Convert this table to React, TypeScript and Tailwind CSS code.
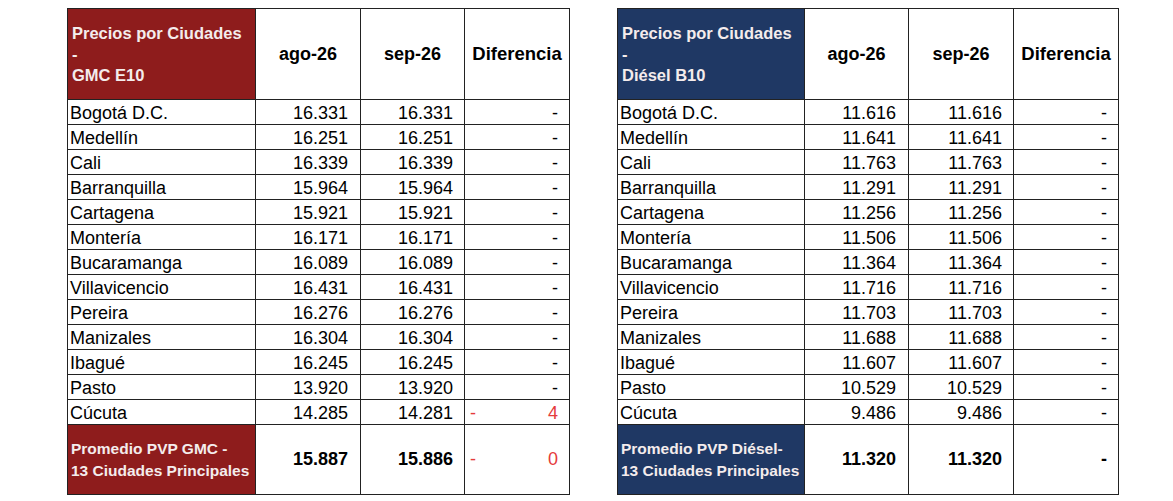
import React from "react";

type Row = { city: string; a: string; b: string; diff?: string };

interface TableProps {
  title: string;
  fuel: string;
  footer: [string, string];
  fill: string;
  rows: Row[];
  avg: [string, string];
  avgDiff?: string;
  widths: [string, string, string, string];
}

const gmc: Row[] = [
  { city: "Bogotá D.C.", a: "16.331", b: "16.331" },
  { city: "Medellín", a: "16.251", b: "16.251" },
  { city: "Cali", a: "16.339", b: "16.339" },
  { city: "Barranquilla", a: "15.964", b: "15.964" },
  { city: "Cartagena", a: "15.921", b: "15.921" },
  { city: "Montería", a: "16.171", b: "16.171" },
  { city: "Bucaramanga", a: "16.089", b: "16.089" },
  { city: "Villavicencio", a: "16.431", b: "16.431" },
  { city: "Pereira", a: "16.276", b: "16.276" },
  { city: "Manizales", a: "16.304", b: "16.304" },
  { city: "Ibagué", a: "16.245", b: "16.245" },
  { city: "Pasto", a: "13.920", b: "13.920" },
  { city: "Cúcuta", a: "14.285", b: "14.281", diff: "4" },
];

const diesel: Row[] = [
  { city: "Bogotá D.C.", a: "11.616", b: "11.616" },
  { city: "Medellín", a: "11.641", b: "11.641" },
  { city: "Cali", a: "11.763", b: "11.763" },
  { city: "Barranquilla", a: "11.291", b: "11.291" },
  { city: "Cartagena", a: "11.256", b: "11.256" },
  { city: "Montería", a: "11.506", b: "11.506" },
  { city: "Bucaramanga", a: "11.364", b: "11.364" },
  { city: "Villavicencio", a: "11.716", b: "11.716" },
  { city: "Pereira", a: "11.703", b: "11.703" },
  { city: "Manizales", a: "11.688", b: "11.688" },
  { city: "Ibagué", a: "11.607", b: "11.607" },
  { city: "Pasto", a: "10.529", b: "10.529" },
  { city: "Cúcuta", a: "9.486", b: "9.486" },
];

const DiffCell = ({ value, bold }: { value?: string; bold?: boolean }) =>
  value ? (
    <div className="flex justify-between pl-[5px] pr-[11px] text-[#e53b3b]">
      <span>-</span>
      <span>{value}</span>
    </div>
  ) : (
    <div className={`text-right pr-[11px] ${bold ? "font-bold" : ""}`}>-</div>
  );

const PriceTable = ({ title, fuel, footer, fill, rows, avg, avgDiff, widths }: TableProps) => {
  return (
    <table className="table-fixed border-collapse border-[1.5px] border-[#222] text-black">
      <colgroup>
        {widths.map((w, i) => (
          <col key={i} className={w} />
        ))}
      </colgroup>
      <thead>
        <tr className="h-[91px]">
          <th className={`${fill} border border-[#222] text-left align-middle px-[4px] text-[16.5px] leading-[21px] font-bold text-[#f4ecec]`}>
            <div>{title}</div>
            <div>-</div>
            <div>{fuel}</div>
          </th>
          <th className="border border-[#222] text-[18px] font-bold text-center">ago-26</th>
          <th className="border border-[#222] text-[18px] font-bold text-center">sep-26</th>
          <th className="border border-[#222] text-[18.5px] font-bold text-center">Diferencia</th>
        </tr>
      </thead>
      <tbody className="text-[18px]">
        {rows.map((r) => (
          <tr key={r.city} className="h-[24.9px] leading-[22px]">
            <td className="border border-[#222] pl-[2px] pt-[2px]">{r.city}</td>
            <td className="border border-[#222] text-right pr-[12px] pt-[2px]">{r.a}</td>
            <td className="border border-[#222] text-right pr-[11px] pt-[2px]">{r.b}</td>
            <td className="border border-[#222] pt-[2px]">
              <DiffCell value={r.diff} />
            </td>
          </tr>
        ))}
        <tr className="h-[70px]">
          <td className={`${fill} border border-[#222] pl-[3px] text-[15.5px] leading-[22px] font-bold text-[#f4ecec] whitespace-nowrap overflow-hidden`}>
            <div>{footer[0]}</div>
            <div>{footer[1]}</div>
          </td>
          <td className="border border-[#222] text-right pr-[12px] font-bold">{avg[0]}</td>
          <td className="border border-[#222] text-right pr-[11px] font-bold">{avg[1]}</td>
          <td className="border border-[#222]">
            <DiffCell value={avgDiff} bold />
          </td>
        </tr>
      </tbody>
    </table>
  );
};

export default function App() {
  return (
    <div className="w-[1173px] h-[501px] bg-white font-['Liberation_Sans',Arial,sans-serif] flex items-start gap-[47px] pl-[67px] pt-[8px]">
      <PriceTable
        title="Precios por Ciudades"
        fuel="GMC E10"
        footer={["Promedio PVP GMC -", "13 Ciudades Principales"]}
        fill="bg-[#8e1c1c]"
        rows={gmc}
        avg={["15.887", "15.886"]}
        avgDiff="0"
        widths={["w-[188px]", "w-[105px]", "w-[104px]", "w-[105px]"]}
      />
      <PriceTable
        title="Precios por Ciudades"
        fuel="Diésel B10"
        footer={["Promedio PVP Diésel-", "13 Ciudades Principales"]}
        fill="bg-[#1f3864]"
        rows={diesel}
        avg={["11.320", "11.320"]}
        widths={["w-[187px]", "w-[104px]", "w-[105px]", "w-[105px]"]}
      />
    </div>
  );
}
